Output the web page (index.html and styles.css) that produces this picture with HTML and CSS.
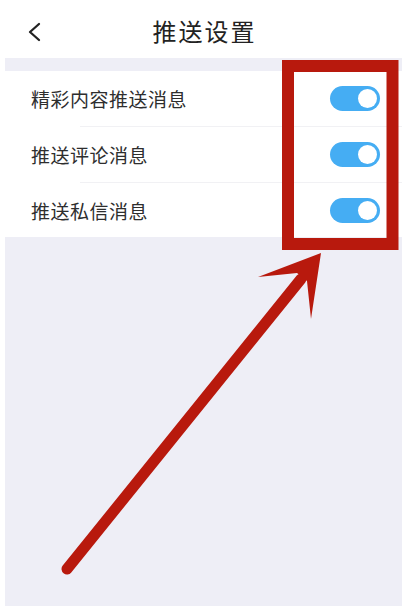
FILE: index.html
```html
<!DOCTYPE html>
<html lang="zh-CN">
<head>
<meta charset="utf-8">
<title>推送设置</title>
<link rel="stylesheet" href="styles.css">
</head>
<body>
<div class="screen">
  <header class="header">
    <svg class="back" width="16" height="22" viewBox="0 0 16 22">
      <polyline points="12,3 3,11 12,19" fill="none" stroke="#222" stroke-width="2.3" stroke-linecap="round" stroke-linejoin="round"/>
    </svg>
    <h1 class="title">推送设置</h1>
  </header>
  <div class="gap"></div>
  <section class="list">
    <div class="row"><span class="label">精彩内容推送消息</span><span class="toggle"><span class="knob"></span></span></div>
    <div class="divider"></div>
    <div class="row"><span class="label">推送评论消息</span><span class="toggle"><span class="knob"></span></span></div>
    <div class="divider"></div>
    <div class="row row-last"><span class="label">推送私信消息</span><span class="toggle"><span class="knob"></span></span></div>
  </section>
  <div class="fill"></div>
</div>
<svg class="annotation" width="405" height="606" viewBox="0 0 405 606">
  <rect x="288" y="66" width="104.5" height="178" fill="none" stroke="#b8190d" stroke-width="12"/>
  <line x1="67" y1="569" x2="301" y2="279" stroke="#b8190d" stroke-width="11" stroke-linecap="round"/>
  <polygon points="321,253 258,277 297,273 307,281 311,319" fill="#b8190d"/>
</svg>
</body>
</html>
```
FILE: styles.css
```css
html, body {
  margin: 0;
  padding: 0;
  background: #ffffff;
  height: 606px;
  overflow: hidden;
}
body {
  font-family: "Noto Sans CJK SC", "Noto Sans", sans-serif;
  color: #2a2a2a;
}
.screen {
  margin: 0 3px 0 5px;
  height: 606px;
  display: flex;
  flex-direction: column;
  background: #eeeef6;
}
.header {
  height: 58px;
  background: #ffffff;
  display: flex;
  align-items: center;
  justify-content: center;
  position: relative;
}
.back {
  position: absolute;
  left: 22px;
  top: 21px;
}
.title {
  margin: 0;
  font-size: 24px;
  font-weight: 400;
  letter-spacing: 2px;
  color: #222;
  line-height: 1;
  padding-top: 4px;
  margin-left: 2px;
}
.gap {
  height: 13px;
}
.list {
  background: #ffffff;
  display: flex;
  flex-direction: column;
}
.row {
  height: 55px;
  display: flex;
  align-items: center;
  justify-content: space-between;
  padding: 0 22px 0 26px;
}
.row-last {
  height: 54px;
}
.label {
  font-size: 19px;
  color: #2e2e2e;
  letter-spacing: 0.5px;
}
.divider {
  height: 1px;
  margin-left: 75px;
  background: #f1f1f4;
}
.toggle {
  width: 50px;
  height: 25px;
  border-radius: 13px;
  background: #45adf3;
  display: flex;
  align-items: center;
  justify-content: flex-end;
  padding-right: 3px;
  box-sizing: border-box;
}
.knob {
  width: 19px;
  height: 19px;
  border-radius: 50%;
  background: #ffffff;
}
.fill {
  flex: 1;
}
.annotation {
  position: absolute;
  left: 0;
  top: 0;
}
```
